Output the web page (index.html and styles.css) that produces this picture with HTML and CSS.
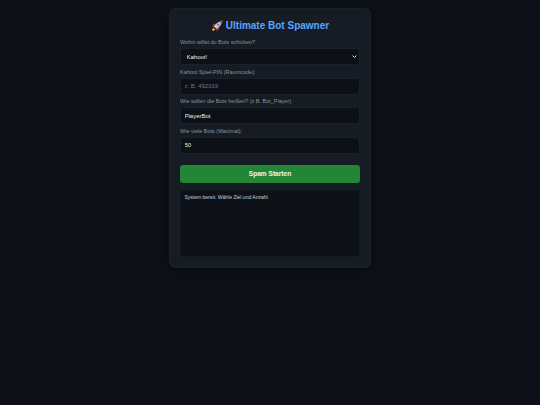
FILE: index.html
```html
<!DOCTYPE html>
<html lang="de">

<head>
    <meta charset="utf-8" />
    <title>Ultimate Bot Spawner</title>
    <link rel="stylesheet" href="styles.css">
</head>

<body>
    <div class="card">
        <h1 class="title">
            <svg class="rocket" viewBox="0 0 24 24" aria-hidden="true">
                <path d="M2 22l2-7 5 5z" fill="#f5a623" />
                <path d="M4 20l1-3 2 2z" fill="#ffe08a" />
                <path d="M7 13l-5 1 3-6 5-1z" fill="#a5303c" />
                <path d="M11 17l-1 5 6-3 1-5z" fill="#a5303c" />
                <path d="M6 13C9 7 15 3 23 1c-2 8-6 14-12 17z" fill="#c3ccd6" />
                <path d="M16 3.500C18 2.600 20.500 1.700 23 1c-.6 2.400-1.400 4.700-2.300 6.800z" fill="#d8343f" />
                <circle cx="14.500" cy="9.500" r="2.300" fill="#4a7fb5" />
            </svg>
            Ultimate Bot Spawner
        </h1>

        <label class="field-label" for="target">Wohin willst du Bots schicken?</label>
        <select class="field" id="target">
            <option>Kahoot!</option>
        </select>

        <label class="field-label" for="pin">Kahoot Spiel-PIN (Raumcode):</label>
        <input class="field" id="pin" type="text" placeholder="z. B. 492019" />

        <label class="field-label" for="name">Wie sollen die Bots heißen? (z.B. Bot_Player)</label>
        <input class="field" id="name" type="text" value="PlayerBot" />

        <label class="field-label" for="count">Wie viele Bots (Maximal):</label>
        <input class="field" id="count" type="text" value="50" />

        <button class="start">Spam Starten</button>

        <div class="log">System bereit. Wähle Ziel und Anzahl.</div>
    </div>
</body>

</html>
```

FILE: styles.css
```css
* {
    box-sizing: border-box;
}

body {
    margin: 0;
    height: 405px;
    padding-top: 8px;
    background: #0d1117;
    display: flex;
    justify-content: center;
    align-items: flex-start;
    font-family: "Liberation Sans", Arial, sans-serif;
}

.card {
    width: 202px;
    height: 260px;
    padding: 11px 10px;
    background: #161c24;
    border: 1px solid #1b2129;
    border-radius: 6px;
    box-shadow: 0 3px 12px rgba(0, 0, 0, 0.4);
    display: flex;
    flex-direction: column;
}

.title {
    margin: 0 0 7px;
    height: 11px;
    font-size: 10px;
    line-height: 11px;
    font-weight: bold;
    color: #58a6ff;
    display: flex;
    justify-content: center;
    align-items: center;
    gap: 3px;
}

.rocket {
    width: 12px;
    height: 12px;
}

.field-label {
    height: 9px;
    margin-bottom: 1px;
    font-size: 5.500px;
    line-height: 9px;
    color: #8b949e;
}

.field {
    width: 100%;
    height: 17px;
    flex-shrink: 0;
    margin-bottom: 2.500px;
    padding: 0 3.500px;
    background: #0d1117;
    border: 1px solid #1b2129;
    border-radius: 3px;
    font-family: inherit;
    font-size: 6px;
    color: #e6edf3;
    outline: none;
}

.field::placeholder {
    color: #6e7681;
}

select.field {
    appearance: none;
    padding-left: 5.500px;
    background-image: url("data:image/svg+xml,%3Csvg xmlns='http://www.w3.org/2000/svg' viewBox='0 0 8 8'%3E%3Cpath d='M1 2.500l3 3 3-3' fill='none' stroke='%23e6edf3' stroke-width='1.600'/%3E%3C/svg%3E");
    background-repeat: no-repeat;
    background-position: right 2px center;
    background-size: 5px 5px;
}

.start {
    height: 18px;
    flex-shrink: 0;
    margin-top: 8.500px;
    background: #238636;
    border: none;
    border-radius: 3px;
    font-family: inherit;
    font-size: 6.600px;
    font-weight: bold;
    color: #f0f6fc;
}

.log {
    height: 67px;
    flex-shrink: 0;
    margin-top: 7px;
    padding: 3.500px 3.500px;
    background: #0d1117;
    border: 1px dotted #1b2129;
    border-radius: 3px;
    font-size: 5px;
    line-height: 7px;
    color: #c9d1d9;
}
```
